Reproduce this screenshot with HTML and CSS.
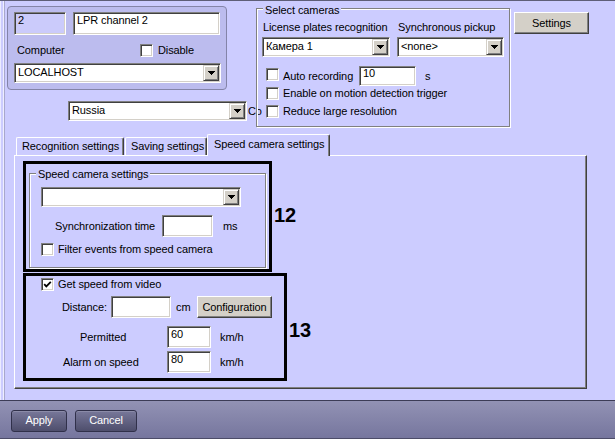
FILE: index.html
```html
<!DOCTYPE html>
<html>
<head>
<meta charset="utf-8">
<link rel="stylesheet" href="styles.css">
</head>
<body>
<div class="win">
  <div class="main">
    <div class="toprow">
      <div class="leftcol">
        <div class="idpanel">
          <div class="r1">
            <div class="field dis w52">2</div>
            <div class="field w147">LPR channel 2</div>
          </div>
          <div class="r2">
            <span class="lcomp">Computer</span>
            <span class="cb"></span>
            <span class="cbl">Disable</span>
          </div>
          <div class="combo w207 r3">
            <span class="val">LOCALHOST</span>
            <span class="dd"><svg width="7" height="4" viewBox="0 0 7 4" shape-rendering="crispEdges"><path d="M0 0h7v1h-1v1h-1v1h-1v1h-1v-1h-1v-1h-1v-1h-1z"/></svg></span>
          </div>
        </div>
        <div class="region">
          <div class="combo w179">
            <span class="val">Russia</span>
            <span class="dd"><svg width="7" height="4" viewBox="0 0 7 4" shape-rendering="crispEdges"><path d="M0 0h7v1h-1v1h-1v1h-1v1h-1v-1h-1v-1h-1v-1h-1z"/></svg></span>
          </div>
          <span class="co">Co</span>
        </div>
      </div>
      <div class="group cams">
        <span class="legend">Select cameras</span>
        <div class="camgrid">
          <span class="gl">License plates recognition</span>
          <span class="gl">Synchronous pickup</span>
          <div class="combo">
            <span class="val">Камера 1</span>
            <span class="dd"><svg width="7" height="4" viewBox="0 0 7 4" shape-rendering="crispEdges"><path d="M0 0h7v1h-1v1h-1v1h-1v1h-1v-1h-1v-1h-1v-1h-1z"/></svg></span>
          </div>
          <div class="combo">
            <span class="val">&lt;none&gt;</span>
            <span class="dd"><svg width="7" height="4" viewBox="0 0 7 4" shape-rendering="crispEdges"><path d="M0 0h7v1h-1v1h-1v1h-1v1h-1v-1h-1v-1h-1v-1h-1z"/></svg></span>
          </div>
        </div>
        <div class="ckrow auto">
          <span class="cb"></span>
          <span class="cbl wauto">Auto recording</span>
          <div class="field w57">10</div>
          <span class="sec">s</span>
        </div>
        <div class="ckrow">
          <span class="cb"></span>
          <span class="cbl">Enable on motion detection trigger</span>
        </div>
        <div class="ckrow rr">
          <span class="cb"></span>
          <span class="cbl">Reduce large resolution</span>
        </div>
      </div>
      <div class="btn settings">Settings</div>
    </div>

    <div class="tabs">
      <div class="tab t1">Recognition settings</div>
      <div class="tab t2">Saving settings</div>
      <div class="tab t3">Speed camera settings</div>
    </div>

    <div class="panel">
      <div class="row">
        <div class="bx bx12">
          <div class="group g12">
            <span class="legend">Speed camera settings</span>
            <div class="combo w200">
              <span class="val"></span>
              <span class="dd"><svg width="7" height="4" viewBox="0 0 7 4" shape-rendering="crispEdges"><path d="M0 0h7v1h-1v1h-1v1h-1v1h-1v-1h-1v-1h-1v-1h-1z"/></svg></span>
            </div>
            <div class="sync">
              <span class="lsync">Synchronization time</span>
              <div class="field w51"></div>
              <span class="ms">ms</span>
            </div>
            <div class="filter">
              <span class="cb"></span>
              <span class="cbl">Filter events from speed camera</span>
            </div>
          </div>
        </div>
        <div class="n n12">12</div>
      </div>
      <div class="row row13">
        <div class="bx bx13">
          <div class="gs">
            <span class="cb"><svg width="11" height="11" viewBox="0 0 11 11"><path d="M2.2 5.2 L4.3 7.4 L8.8 2.8" fill="none" stroke="#000" stroke-width="1.8"/></svg></span>
            <span class="cbl">Get speed from video</span>
          </div>
          <div class="frow dist">
            <span class="ldist">Distance:</span>
            <div class="field w60"></div>
            <span class="cm">cm</span>
            <div class="btn conf">Configuration</div>
          </div>
          <div class="frow perm">
            <span class="lperm">Permitted</span>
            <div class="field w44">60</div>
            <span class="kmh">km/h</span>
          </div>
          <div class="frow alarm">
            <span class="lalarm">Alarm on speed</span>
            <div class="field w44">80</div>
            <span class="kmh">km/h</span>
          </div>
        </div>
        <div class="n n13">13</div>
      </div>
    </div>
  </div>
  <div class="bar">
    <div class="dbtn apply">Apply</div>
    <div class="dbtn cancel">Cancel</div>
  </div>
</div>
</body>
</html>
```
FILE: styles.css
```css
* { box-sizing: border-box; }
html, body { margin: 0; padding: 0; }
body {
  width: 615px; height: 439px; overflow: hidden;
  background: #ccccff;
  font-family: "Liberation Sans", Arial, sans-serif;
  font-size: 11px; line-height: 13px; letter-spacing: -0.1px; color: #000;
}
.win {
  width: 615px; height: 439px;
  display: flex; flex-direction: column;
  background: #ccccff;
  border-top: 1px solid #5e5e78;
  box-shadow: inset 1px 0 0 #ececff;
}
.main {
  height: 399px; flex-shrink: 0;
  margin-left: 4px;
  border-left: 1px solid #a8a8cc;
  box-shadow: -1px 0 0 #eeeeff;
}

/* generic controls */
.field {
  border: 1px solid; border-color: #808080 #fff #fff #808080;
  box-shadow: inset 1px 1px 0 #404040, inset -1px -1px 0 #d4d0c8;
  background: #fff; padding: 1px 3px 0; line-height: 13px; white-space: nowrap;
  flex-shrink: 0;
}
.dis { background: #cbcbfb; }
.combo {
  display: flex; height: 20px; flex-shrink: 0;
  border: 1px solid; border-color: #808080 #fff #fff #808080;
  box-shadow: inset 1px 1px 0 #404040, inset -1px -1px 0 #d4d0c8;
  background: #fff; padding: 1px;
}
.val { flex: 1; padding-left: 2px; line-height: 15px; white-space: nowrap; overflow: hidden; }
.dd {
  width: 16px; height: 16px; flex-shrink: 0;
  background: #d4d0c8;
  border: 1px solid; border-color: #d4d0c8 #404040 #404040 #d4d0c8;
  box-shadow: inset 1px 1px 0 #fff, inset -1px -1px 0 #808080;
  display: flex; align-items: center; justify-content: center;
}
.dd svg { display: block; }
.cb {
  width: 13px; height: 13px; flex-shrink: 0;
  border: 1px solid; border-color: #808080 #fff #fff #808080;
  box-shadow: inset 1px 1px 0 #404040, inset -1px -1px 0 #d4d0c8;
  background: #fff;
}
.cb svg { display: block; }
.cbl { margin-left: 4px; white-space: nowrap; }
.btn {
  background: #d4d0c8;
  border: 1px solid; border-color: #fff #404040 #404040 #fff;
  box-shadow: inset -1px -1px 0 #808080;
  display: flex; align-items: center; justify-content: center;
  flex-shrink: 0; white-space: nowrap;
}
.group {
  position: relative; flex-shrink: 0;
  border: 1px solid #808080;
  box-shadow: inset 1px 1px 0 #fff, 1px 1px 0 #fff;
}
.legend {
  position: absolute; left: 6px; top: -5px;
  padding: 0 2px; background: #ccccff; line-height: 13px; white-space: nowrap;
}

/* top area */
.toprow { display: flex; align-items: flex-start; height: 133px; }
.leftcol { width: 249px; margin-left: 2px; margin-top: 5px; flex-shrink: 0; }
.idpanel {
  width: 220px; height: 84px;
  border: 1px solid #8484a8; border-radius: 4px;
  background: #bcbcee;
  padding: 5px 0 0 6px;
}
.r1 { display: flex; gap: 7px; }
.w52 { width: 52px; height: 23px; }
.w147 { width: 147px; height: 23px; }
.r2 { display: flex; align-items: center; height: 13px; margin-top: 9px; }
.lcomp { width: 126px; padding-left: 3px; }
.r2 .cbl { margin-left: 5px; }
.r3 { margin-top: 6px; }
.w207 { width: 207px; }
.region { display: flex; align-items: center; margin-left: 61px; margin-top: 11px; }
.w179 { width: 179px; }
.co { white-space: nowrap; margin-left: 1px; flex-shrink: 0; }

.cams { width: 254px; height: 119px; margin-top: 7px; }
.camgrid {
  display: grid; grid-template-columns: 128px 107px;
  column-gap: 7px; row-gap: 3px;
  margin: 12px 0 0 5px;
}
.gl { padding-left: 1px; white-space: nowrap; }
.ckrow { display: flex; align-items: center; height: 13px; margin-left: 9px; margin-top: 1px; }
.ckrow.auto { height: 20px; margin-top: 9px; }
.auto .cb { align-self: flex-start; margin-top: 2px; }
.ckrow.rr { margin-top: 5px; }
.wauto { width: 76px; }
.w57 { width: 57px; height: 20px; padding-top: 0; }
.sec { margin-left: 9px; }
.settings { width: 75px; height: 22px; margin: 11px 0 0 4px; }

/* tabs */
.tabs { display: flex; align-items: flex-end; height: 21px; margin-left: 9px; }
.tab {
  height: 18px; white-space: nowrap;
  border-top: 1px solid #fff; border-left: 1px solid #fff; border-right: 1px solid #404040;
  box-shadow: inset -1px 0 0 #808080;
  border-radius: 2px 2px 0 0;
  padding: 2px 0 0 5px;
  background: #ccccff;
}
.t1 { margin-left: 2px; width: 108px; }
.t2 { margin-left: 1px; width: 82px; }
.t3 {
  width: 123px; height: 22px; margin-bottom: -1px;
  position: relative; z-index: 1;
  padding: 3px 0 0 6px;
}
.panel {
  width: 573px; height: 234px; margin-left: 9px;
  border-top: 1px solid #fff; border-left: 1px solid #fff;
  border-right: 1px solid #404040; border-bottom: 1px solid #404040;
  box-shadow: inset -1px -1px 0 #808080;
  padding: 5px 0 0 8px;
}

/* annotated boxes */
.row { display: flex; align-items: flex-start; }
.bx { border: 3px solid #000; flex-shrink: 0; }
.bx12 { width: 249px; height: 111px; padding: 9px 0 0 3px; }
.n { font-weight: bold; font-size: 20px; line-height: 20px; letter-spacing: 0; margin-left: 2px; }
.n12 { margin-top: 44px; }
.row13 { margin-top: 1px; }
.bx13 { width: 264px; height: 108px; padding: 2px 0 0 15px; }
.n13 { margin-top: 47px; }

.g12 { width: 237px; height: 95px; padding: 13px 0 0 11px; }
.g12 .legend { top: -6px; }
.w200 { width: 200px; }
.sync { display: flex; align-items: center; height: 22px; margin-top: 8px; margin-left: 14px; }
.lsync { width: 107px; white-space: nowrap; }
.w51 { width: 51px; height: 22px; }
.ms { margin-left: 10px; }
.filter { display: flex; align-items: center; height: 13px; margin-top: 6px; }

.gs { display: flex; align-items: center; height: 13px; }
.frow { display: flex; align-items: center; height: 22px; }
.dist { margin-top: 5px; margin-left: 21px; }
.ldist { width: 49px; }
.w60 { width: 60px; height: 22px; }
.cm { margin-left: 5px; width: 21px; }
.conf { width: 75px; height: 22px; }
.perm { margin-top: 8px; margin-left: 39px; }
.lperm { width: 87px; }
.alarm { margin-top: 3px; margin-left: 22px; }
.lalarm { width: 104px; white-space: nowrap; }
.w44 { width: 44px; height: 22px; }
.kmh { margin-left: 9px; }

/* bottom bar */
.bar {
  height: 39px; flex-shrink: 0;
  border-top: 1px solid #3c3c56; border-bottom: 1px solid #4c4c68;
  background: linear-gradient(#9292b4, #76769e);
  display: flex; gap: 8px; padding: 9px 0 0 11px;
}
.dbtn {
  height: 22px;
  border: 1px solid #30304a; border-radius: 3px;
  background: linear-gradient(#78789a, #4e4e6c);
  color: #fff; text-align: center; line-height: 19px;
  box-shadow: inset 0 1px 0 rgba(255,255,255,0.15);
}
.apply { width: 56px; }
.cancel { width: 62px; }
```
